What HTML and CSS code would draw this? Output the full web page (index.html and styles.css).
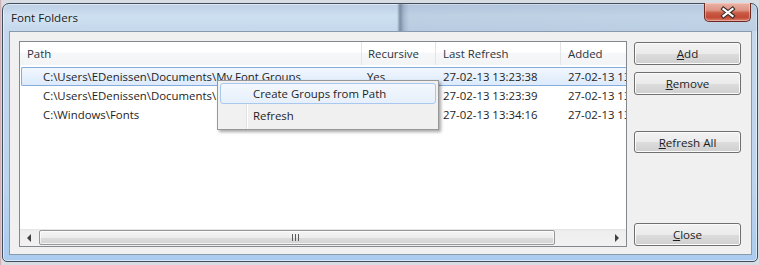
FILE: index.html
```html
<!DOCTYPE html>
<html lang="en">
<head>
  <meta charset="UTF-8" />
  <meta name="viewport" content="width=device-width, initial-scale=1.0" />
  <title>Font Folders</title>
  <link rel="stylesheet" href="styles.css">
</head>
<body>
  <div class="window">
    <div class="titlebar">
      <span class="title">Font Folders</span>
      <div class="close-x">
        <svg width="47" height="19" viewBox="0 0 47 19">
          <path d="M19.5 6 L28.5 13 M28.5 6 L19.5 13" stroke="#3a2a28" stroke-width="4.2" stroke-linecap="square" fill="none"/>
          <path d="M19.5 6 L28.5 13 M28.5 6 L19.5 13" stroke="#ffffff" stroke-width="2.2" stroke-linecap="square" fill="none"/>
        </svg>
      </div>
    </div>
    <div class="client">
      <div class="listview">
        <div class="lv-header">
          <div class="hcol c-path">Path</div>
          <div class="hcol c-rec">Recursive</div>
          <div class="hcol c-ref">Last Refresh</div>
          <div class="hcol c-add">Added</div>
        </div>
        <div class="lv-body">
          <div class="row selected">
            <div class="cell c-path">C:\Users\EDenissen\Documents\My Font Groups</div>
            <div class="cell c-rec">Yes</div>
            <div class="cell c-ref">27-02-13 13:23:38</div>
            <div class="cell c-add">27-02-13 13:23:38</div>
          </div>
          <div class="row">
            <div class="cell c-path">C:\Users\EDenissen\Documents\Fonts</div>
            <div class="cell c-rec">Yes</div>
            <div class="cell c-ref">27-02-13 13:23:39</div>
            <div class="cell c-add">27-02-13 13:23:39</div>
          </div>
          <div class="row">
            <div class="cell c-path">C:\Windows\Fonts</div>
            <div class="cell c-rec">No</div>
            <div class="cell c-ref">27-02-13 13:34:16</div>
            <div class="cell c-add">27-02-13 13:34:16</div>
          </div>
        </div>
        <div class="hscroll">
          <div class="sb-arrow"><span class="tri-left"></span></div>
          <div class="sb-track">
            <div class="sb-thumb"><span class="grip"></span></div>
          </div>
          <div class="sb-arrow"><span class="tri-right"></span></div>
        </div>
      </div>
      <div class="buttons">
        <button class="btn btn-add"><u>A</u>dd</button>
        <button class="btn btn-remove"><u>R</u>emove</button>
        <button class="btn btn-refresh"><u>R</u>efresh All</button>
        <button class="btn btn-close"><u>C</u>lose</button>
      </div>
    </div>
  </div>

  <div class="menu">
    <div class="menu-item hot">Create Groups from Path</div>
    <div class="menu-item">Refresh</div>
  </div>
</body>
</html>
```

FILE: styles.css
```css
body {
  margin: 0;
  width: 759px;
  height: 265px;
  overflow: hidden;
  background: linear-gradient(to right, #c9a3a8 0, #e9dfe2 2px, #d8dde4 3px);
  font-family: "Open Sans", "Noto Sans", sans-serif;
  font-size: 11.4px;
  color: #1e1e1e;
}
.window {
  margin: 3px 0 0 2px;
  width: 756px;
  height: 259px;
  box-sizing: border-box;
  border: 1px solid #3f4d5e;
  border-radius: 7px 7px 5px 5px;
  background: linear-gradient(180deg, #bccfe4 0, #cddff0 12px, #c5d8ec 28px, #bcd4ee 180px, #a9cbef 259px);
  box-shadow: inset 0 0 0 1px rgba(255, 255, 255, 0.55);
  display: flex;
  flex-direction: column;
}
.titlebar {
  height: 27px;
  display: flex;
  align-items: center;
  padding: 0 6px 0 8px;
  background: linear-gradient(to right, rgba(0, 0, 0, 0) 394px, rgba(30, 45, 75, 0.45) 397px, rgba(30, 45, 75, 0.2) 401px, rgba(130, 150, 178, 0.2) 406px, rgba(130, 150, 178, 0.15) 700px);
  border-radius: 6px 6px 0 0;
}
.title {
  color: #1b1b1b;
  font-size: 11.6px;
  text-shadow: 0 0 6px rgba(255, 255, 255, 0.9);
}
.close-x {
  margin-left: auto;
  align-self: flex-start;
  margin-top: -1px;
  width: 47px;
  height: 19px;
  box-sizing: border-box;
  border: 1px solid #6b2a22;
  border-top: none;
  border-radius: 0 0 5px 5px;
  background: linear-gradient(180deg, #eab3a6 0, #df9584 40%, #c95a44 55%, #c24a35 80%, #d9826f 100%);
  box-shadow: inset 0 0 0 1px rgba(255, 220, 210, 0.45);
}
.close-x svg {
  display: block;
  margin: 0 -1px;
}
.client {
  flex: 1;
  margin: 0 5px 6px 6px;
  border: 1px solid #8a9aad;
  background: #f0f0f0;
  display: flex;
  gap: 7px;
  padding: 9px 10px 7px 9px;
}
.listview {
  width: 608px;
  box-sizing: border-box;
  border: 1px solid #828790;
  background: #fff;
  display: flex;
  flex-direction: column;
  overflow: hidden;
}
.lv-header {
  display: flex;
  height: 23px;
  background: linear-gradient(180deg, #ffffff 0, #ffffff 45%, #f6f7f8 50%, #f3f4f5 100%);
  flex-shrink: 0;
}
.hcol {
  box-sizing: border-box;
  border-right: 1px solid #e3e5e8;
  line-height: 23px;
  color: #2a3442;
  white-space: nowrap;
  flex-shrink: 0;
}
.hcol.c-path { width: 342px; padding-left: 7px; }
.hcol.c-rec { width: 74px; padding-left: 6px; }
.hcol.c-ref { width: 125px; padding-left: 7px; }
.hcol.c-add { width: 120px; padding-left: 7px; border-right: none; }
.lv-body {
  flex: 1;
  padding-top: 2px;
}
.row {
  display: flex;
  height: 19px;
  box-sizing: border-box;
  margin-left: 1px;
  border: 1px solid transparent;
  border-right: none;
  line-height: 17px;
  white-space: nowrap;
}
.row.selected {
  border-color: #84acdd;
  border-radius: 2px 0 0 2px;
  background: linear-gradient(180deg, #f1f7fe 0, #dceafc 100%);
}
.cell {
  flex-shrink: 0;
  box-sizing: border-box;
  overflow: hidden;
}
.cell.c-path { width: 340px; padding-left: 21px; }
.cell.c-rec { width: 74px; padding-left: 5px; }
.cell.c-ref { width: 125px; padding-left: 7px; }
.cell.c-add { width: 120px; padding-left: 7px; }
.hscroll {
  height: 17px;
  display: flex;
  flex-shrink: 0;
  background: linear-gradient(180deg, #e3e3e3 0, #eeeeee 2px, #f2f2f2 100%);
}
.sb-arrow {
  width: 18px;
  display: flex;
  align-items: center;
  justify-content: center;
}
.tri-left {
  width: 0;
  height: 0;
  border-top: 4px solid transparent;
  border-bottom: 4px solid transparent;
  border-right: 4px solid #404040;
}
.tri-right {
  width: 0;
  height: 0;
  border-top: 4px solid transparent;
  border-bottom: 4px solid transparent;
  border-left: 4px solid #404040;
}
.sb-track {
  flex: 1;
  padding: 1px 0 1px 1px;
}
.sb-thumb {
  width: 516px;
  height: 15px;
  box-sizing: border-box;
  border: 1px solid #979797;
  border-radius: 2px;
  background: linear-gradient(180deg, #f5f5f5 0, #ececec 50%, #dcdcdc 51%, #d4d4d4 100%);
  box-shadow: inset 0 0 0 1px rgba(255, 255, 255, 0.7);
  display: flex;
  align-items: center;
  justify-content: center;
}
.grip {
  width: 7px;
  height: 7px;
  margin-left: -3px;
  background: repeating-linear-gradient(to right, #5a5a5a 0, #5a5a5a 1px, transparent 1px, transparent 3px);
}
.buttons {
  width: 107px;
  display: flex;
  flex-direction: column;
  padding: 1px 0;
}
.btn {
  height: 23px;
  box-sizing: border-box;
  border: 1px solid #707070;
  border-radius: 3px;
  background: linear-gradient(180deg, #f2f2f2 0, #ebebeb 50%, #dddddd 51%, #cfcfcf 100%);
  box-shadow: inset 0 0 0 1px #fbfbfb;
  font-family: inherit;
  font-size: 11.6px;
  color: #1e1e1e;
  padding: 0;
}
.btn-remove { margin-top: 7px; }
.btn-refresh { margin-top: 36px; height: 22px; }
.btn-close { margin-top: auto; }
.menu {
  position: absolute;
  left: 217px;
  top: 80px;
  width: 222px;
  height: 50px;
  box-sizing: border-box;
  border: 1px solid #979797;
  padding: 2px;
  background: linear-gradient(to right, #f1f1f1 0, #f1f1f1 28px, #e2e3e3 28px, #e2e3e3 29px, #ffffff 29px, #ffffff 30px, #f0f0f0 30px);
  box-shadow: 2px 2px 3px rgba(0, 0, 0, 0.35);
}
.menu-item {
  height: 22px;
  box-sizing: border-box;
  border: 1px solid transparent;
  border-radius: 3px;
  line-height: 20px;
  padding-left: 32px;
  white-space: nowrap;
}
.menu-item.hot {
  height: 21px;
  margin-bottom: 1px;
  border-color: #a9c8ee;
  background: linear-gradient(180deg, #f4f8fd 0, #e6effb 100%);
}
```
